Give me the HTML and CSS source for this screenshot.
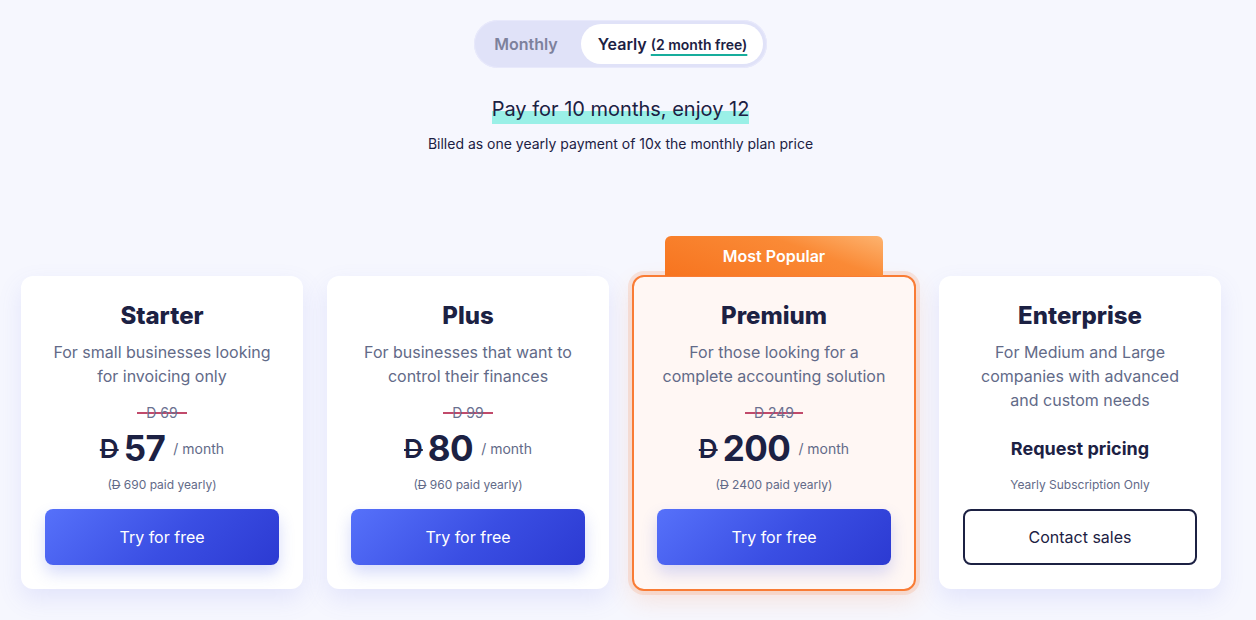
FILE: index.html
```html
<!DOCTYPE html>
<html lang="en">
<head>
<meta charset="utf-8">
<title>Pricing</title>
<link rel="stylesheet" href="styles.css">
</head>
<body>
<div class="page">
  <div class="toggle-wrap">
    <div class="toggle">
      <span class="opt">Monthly</span>
      <span class="opt opt--active">Yearly&nbsp;<span class="free">(2 month free)</span></span>
    </div>
  </div>
  <div class="headline-wrap"><span class="headline">Pay for 10 months, enjoy 12</span></div>
  <p class="sub">Billed as one yearly payment of 10x the monthly plan price</p>

  <div class="cards">
    <div class="card">
      <h2 class="title">Starter</h2>
      <p class="desc">For small businesses looking for invoicing only</p>
      <div class="old-row"><span class="old">D 69</span></div>
      <div class="price"><span class="cur">D</span><span class="amt">57</span><span class="per">/ month</span></div>
      <div class="note">(<span class="d">D</span> 690 paid yearly)</div>
      <a class="btn">Try for free</a>
    </div>
    <div class="card">
      <h2 class="title">Plus</h2>
      <p class="desc">For businesses that want to control their finances</p>
      <div class="old-row"><span class="old">D 99</span></div>
      <div class="price"><span class="cur">D</span><span class="amt">80</span><span class="per">/ month</span></div>
      <div class="note">(<span class="d">D</span> 960 paid yearly)</div>
      <a class="btn">Try for free</a>
    </div>
    <div class="card card--popular">
      <div class="badge">Most Popular</div>
      <h2 class="title">Premium</h2>
      <p class="desc">For those looking for a complete accounting solution</p>
      <div class="old-row"><span class="old">D 249</span></div>
      <div class="price"><span class="cur">D</span><span class="amt">200</span><span class="per">/ month</span></div>
      <div class="note">(<span class="d">D</span> 2400 paid yearly)</div>
      <a class="btn">Try for free</a>
    </div>
    <div class="card">
      <h2 class="title">Enterprise</h2>
      <p class="desc desc--wide">For Medium and Large companies with advanced and custom needs</p>
      <div class="price price--custom"><span class="request">Request pricing</span></div>
      <div class="note">Yearly Subscription Only</div>
      <a class="btn btn--outline">Contact sales</a>
    </div>
  </div>
</div>
</body>
</html>
```

FILE: styles.css
```css
* { box-sizing: border-box; }
html, body { margin: 0; padding: 0; }
body {
  background: #f6f7fe;
  font-family: Inter, "Noto Sans", sans-serif;
  color: #1c2143;
  height: 620px;
  overflow: hidden;
}
.page {
  width: 1241px;
  padding-top: 20px;
}
.toggle-wrap { display: flex; justify-content: center; }
.toggle {
  display: flex;
  align-items: center;
  height: 48px;
  padding: 4px;
  border-radius: 24px;
  background: #e0e2f8;
  box-shadow: inset 0 0 0 1px #e8e9fb;
}
.opt {
  height: 40px;
  display: flex;
  align-items: center;
  padding: 0 23px 0 16px;
  font-size: 16px;
  font-weight: 600;
  color: #7d819c;
  border-radius: 20px;
}
.opt--active {
  background: #fff;
  color: #1c2143;
  padding: 0 12px 0 17px;
  width: 182px;
  white-space: nowrap;
}
.free {
  font-size: 14px;
  font-weight: 600;
  text-decoration: underline;
  text-decoration-color: #16ad9c;
  text-decoration-thickness: 2px;
  text-underline-offset: 4px;
}
.headline-wrap {
  display: flex;
  justify-content: center;
  margin-top: 26px;
}
.headline {
  display: inline-block;
  font-size: 20px;
  line-height: 30px;
  height: 30px;
  color: #1c2143;
  background: linear-gradient(transparent 56%, #9af0e7 56%);
}
.sub {
  margin: 10px 0 0;
  text-align: center;
  font-size: 14px;
  line-height: 20px;
  color: #1c2143;
}
.cards {
  display: flex;
  gap: 24px;
  margin-top: 122px;
  padding-left: 21px;
}
.card {
  position: relative;
  width: 282px;
  height: 313px;
  background: #fff;
  border-radius: 12px;
  padding: 24px 24px 24px;
  text-align: center;
  box-shadow: 0 10px 24px rgba(98, 110, 230, 0.13);
  display: flex;
  flex-direction: column;
  align-items: center;
}
.card--popular {
  background: #fff7f4;
  border: 2px solid #f97c35;
  box-shadow: 0 0 0 4px rgba(249, 124, 53, 0.16), 0 10px 24px rgba(249, 124, 53, 0.16);
  width: 284px;
  height: 316px;
  margin: -1px -1px -2px -1px;
  padding: 23px 22px 22px;
}
.badge {
  position: absolute;
  top: -41px;
  left: 50%;
  transform: translateX(-50%);
  width: 218px;
  height: 40px;
  border-radius: 6px 6px 0 0;
  background: linear-gradient(200deg, #fdb36f 0%, #fa8a36 35%, #f7741f 100%);
  color: #fff;
  font-size: 16px;
  font-weight: 600;
  line-height: 40px;
}
.title {
  margin: 0;
  font-size: 24px;
  line-height: 32px;
  font-weight: 800;
  color: #1c2143;
}
.desc {
  margin: 8px 0 0;
  font-size: 16px;
  line-height: 24px;
  color: #626a88;
  min-height: 63px;
  width: 234px;
}
.desc--wide { width: 210px; min-height: 72px; }
.old-row {
  height: 20px;
  display: flex;
  justify-content: center;
}
.old {
  display: inline-block;
  font-size: 14px;
  line-height: 20px;
  color: #6a7090;
  padding: 0 9px;
  background: linear-gradient(transparent 9px, #c14a6b 9px, #c14a6b 11px, transparent 11px);
}
.price {
  margin-top: 3px;
  height: 44px;
  display: flex;
  align-items: center;
  justify-content: center;
}
.price--custom { margin-top: 14px; }
.cur {
  font-size: 26px;
  font-weight: 600;
  color: #1c2143;
  margin-right: 5px;
  text-decoration: line-through;
  text-decoration-thickness: 2px;
}
.d {
  text-decoration: line-through;
  text-decoration-thickness: 1px;
}
.amt {
  font-size: 35px;
  font-weight: 700;
  color: #1c2143;
  letter-spacing: -0.5px;
}
.per {
  font-size: 14px;
  color: #626a88;
  margin-left: 8px;
  margin-top: 0;
}
.request {
  font-size: 18px;
  font-weight: 700;
  color: #1c2143;
}
.note {
  margin-top: 7px;
  font-size: 12px;
  line-height: 16px;
  color: #626a88;
}
.btn {
  margin-top: 16px;
  width: 234px;
  height: 56px;
  border-radius: 8px;
  display: flex;
  align-items: center;
  justify-content: center;
  font-size: 16px;
  color: #fff;
  background: linear-gradient(135deg, #5671fa 0%, #3a4ee3 55%, #2c3ad2 100%);
  box-shadow: 0 8px 16px rgba(70, 90, 230, 0.22);
  flex-shrink: 0;
}
.btn--outline {
  background: #fff;
  color: #1c2143;
  border: 2px solid #1c2143;
  box-shadow: none;
}
```
